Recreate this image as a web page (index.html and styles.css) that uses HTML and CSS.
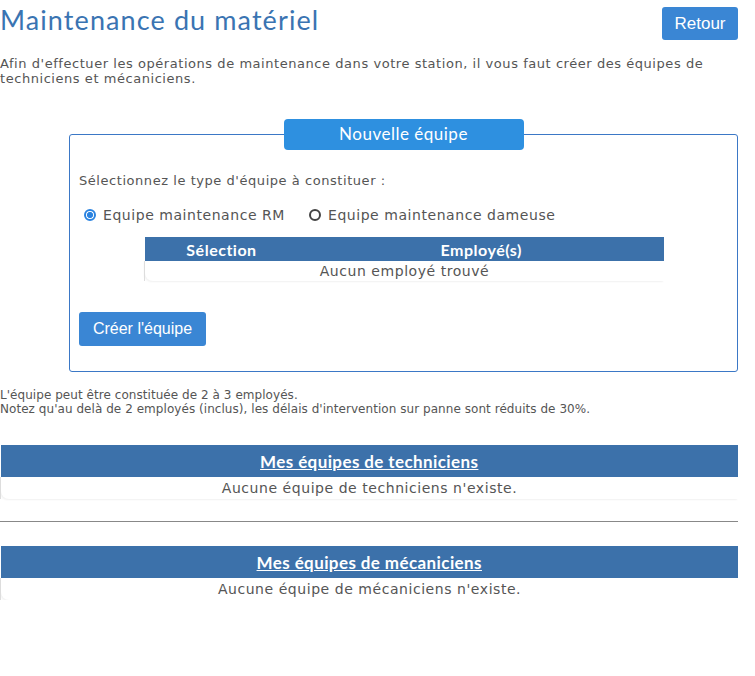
FILE: index.html
```html
<!DOCTYPE html>
<html>
<head>
  <title>Maintenance du matériel</title>
  <link rel="stylesheet" href="styles.css">
</head>
<body>
  <div class="page">
    <div class="top-bar">
      <h1 class="page-title">Maintenance du matériel</h1>
      <button class="btn btn-back">Retour</button>
    </div>

    <p class="intro">Afin d'effectuer les opérations de maintenance dans votre station, il vous faut créer des équipes de techniciens et mécaniciens.</p>

    <fieldset class="new-team">
      <legend>Nouvelle équipe</legend>
      <p class="choose">Sélectionnez le type d'équipe à constituer :</p>
      <div class="radios">
        <label class="radio"><span class="dot checked"></span>Equipe maintenance RM</label>
        <label class="radio"><span class="dot"></span>Equipe maintenance dameuse</label>
      </div>

      <table class="staff">
        <thead>
          <tr>
            <th class="col-sel">Sélection</th>
            <th>Employé(s)</th>
          </tr>
        </thead>
        <tbody>
          <tr>
            <td colspan="2">Aucun employé trouvé</td>
          </tr>
        </tbody>
      </table>

      <button class="btn btn-create">Créer l'équipe</button>
    </fieldset>

    <p class="note">L'équipe peut être constituée de 2 à 3 employés.<br>Notez qu'au delà de 2 employés (inclus), les délais d'intervention sur panne sont réduits de 30%.</p>

    <table class="teams first">
      <thead>
        <tr><th><a href="#">Mes équipes de techniciens</a></th></tr>
      </thead>
      <tbody>
        <tr><td>Aucune équipe de techniciens n'existe.</td></tr>
      </tbody>
    </table>

    <hr class="sep">

    <table class="teams">
      <thead>
        <tr><th><a href="#">Mes équipes de mécaniciens</a></th></tr>
      </thead>
      <tbody>
        <tr><td>Aucune équipe de mécaniciens n'existe.</td></tr>
      </tbody>
    </table>
  </div>
</body>
</html>
```

FILE: styles.css
```css
body {
  margin: 0;
  background: #fff;
  font-family: "DejaVu Sans", Verdana, sans-serif;
  letter-spacing: 0.55px;
  color: #555;
}

.page {
  width: 738px;
}

.top-bar {
  display: flex;
  justify-content: space-between;
  align-items: flex-start;
}

.page-title {
  margin: 3px 0 0;
  font-family: Lato, "Open Sans", sans-serif;
  font-weight: 400;
  font-size: 27px;
  letter-spacing: 1.1px;
  color: #3a74b2;
}

.btn {
  font-family: "Liberation Sans", Arial, sans-serif;
  letter-spacing: 0;
  color: #fff;
  background: #3a86d4;
  border: none;
  border-radius: 3px;
  cursor: pointer;
}

.btn-back {
  margin-top: 7px;
  width: 76px;
  height: 33px;
  font-size: 17px;
}

.intro {
  margin: 16px 0 0;
  font-size: 13px;
  line-height: 15px;
}

.new-team {
  margin: 33px 0 0 69px;
  padding: 0 9px 25px;
  border: 1px solid #3b78c6;
  border-radius: 3px;
  min-height: 200px;
}

.new-team legend {
  margin: 0 auto;
  width: 240px;
  height: 31px;
  padding: 0;
  background: #2e90e0;
  border-radius: 4px;
  color: #fff;
  text-align: center;
  font-family: Lato, "Open Sans", sans-serif;
  font-size: 17px;
  letter-spacing: 0.5px;
  line-height: 29px;
}

.choose {
  margin: 23px 0 0;
  font-size: 13px;
}

.radios {
  display: flex;
  gap: 24px;
  margin: 19px 0 0 5px;
  font-size: 14px;
}

.radio {
  display: flex;
  align-items: center;
  gap: 7px;
}

.dot {
  box-sizing: border-box;
  width: 12px;
  height: 12px;
  border: 2px solid #444;
  border-radius: 50%;
}

.dot.checked {
  border-color: #2b83e0;
  background: radial-gradient(circle, #2b83e0 0 2.8px, #fff 3.3px);
}

.staff {
  margin: 14px 0 0 65px;
  width: 520px;
  border-collapse: collapse;
}

.staff th,
.teams th {
  background: #3c71aa;
  color: #fff;
  font-family: Lato, "Open Sans", sans-serif;
  font-weight: 700;
  font-size: 16px;
  letter-spacing: 0.5px;
  padding: 0;
  height: 24px;
}

.staff .col-sel {
  width: 154px;
}

.staff td,
.teams td {
  text-align: center;
  font-size: 14px;
  height: 20px;
  padding: 0;
  border-left: 1px solid #ddd;
  border-bottom-left-radius: 8px;
  box-shadow: -1px 1px 2px rgba(0, 0, 0, 0.06);
}

.btn-create {
  margin-top: 31px;
  width: 127px;
  height: 34px;
  font-size: 16px;
}

.note {
  margin: 16px 0 0;
  font-size: 12px;
  letter-spacing: 0.05px;
  line-height: 14px;
}

.teams {
  width: 100%;
  border-collapse: collapse;
}

.teams.first {
  margin-top: 29px;
}

.teams th {
  height: 32px;
  font-size: 17px;
  letter-spacing: 0.4px;
}

.teams th a {
  color: #fff;
}

.teams td {
  height: 22px;
}

.sep {
  margin: 22px 0 24px;
  border: none;
  border-top: 1px solid #888;
}
```
